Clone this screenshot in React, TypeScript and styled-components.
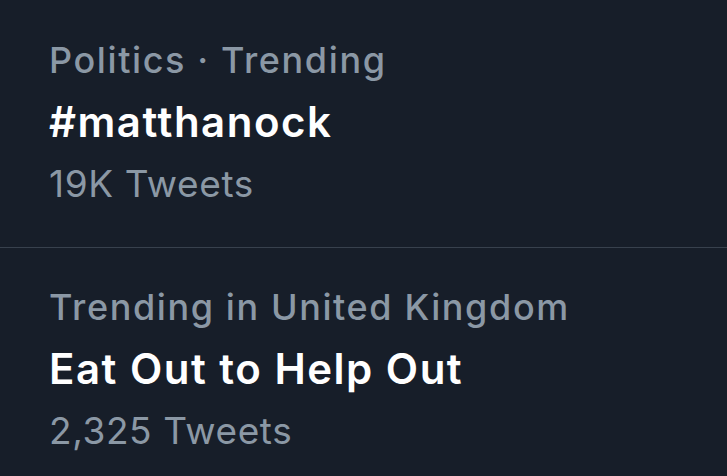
import styled, { createGlobalStyle } from "styled-components";

const GlobalStyle = createGlobalStyle`
  html, body {
    margin: 0;
    padding: 0;
    background: #171e29;
  }
  body {
    font-family: Inter, "Noto Sans", "Liberation Sans", sans-serif;
    -webkit-font-smoothing: antialiased;
  }
`;

const TrendList = styled.div`
  width: 727px;
  height: 476px;
  overflow: hidden;
  background: #171e29;
`;

const TrendItem = styled.div`
  display: flex;
  flex-direction: column;
  padding: 30px 50px 0 49px;
  height: 248px;
  box-sizing: border-box;
  border-bottom: 1px solid #38414d;

  &:last-child {
    border-bottom: none;
    padding-top: 29px;
  }
`;

const Context = styled.span`
  font-size: 36px;
  font-weight: 500;
  letter-spacing: 1.6px;
  line-height: 60px;
  color: #8b98a5;
  white-space: nowrap;
`;

const Topic = styled.span`
  font-size: 42px;
  font-weight: 600;
  letter-spacing: 1.5px;
  line-height: 62px;
  margin-top: 1px;
  margin-bottom: 1px;
  color: #ffffff;
  white-space: nowrap;
`;

const Count = styled.span`
  font-size: 37px;
  font-weight: 400;
  letter-spacing: 0.6px;
  line-height: 60px;
  color: #8b98a5;
  white-space: nowrap;
`;

const trends = [
  { context: "Politics · Trending", topic: "#matthanock", count: "19K Tweets" },
  { context: "Trending in United Kingdom", topic: "Eat Out to Help Out", count: "2,325 Tweets" },
];

const App = () => {
  return (
    <>
      <GlobalStyle />
      <TrendList>
        {trends.map((t) => (
          <TrendItem key={t.topic}>
            <Context>{t.context}</Context>
            <Topic>{t.topic}</Topic>
            <Count>{t.count}</Count>
          </TrendItem>
        ))}
      </TrendList>
    </>
  );
};

export default App;
